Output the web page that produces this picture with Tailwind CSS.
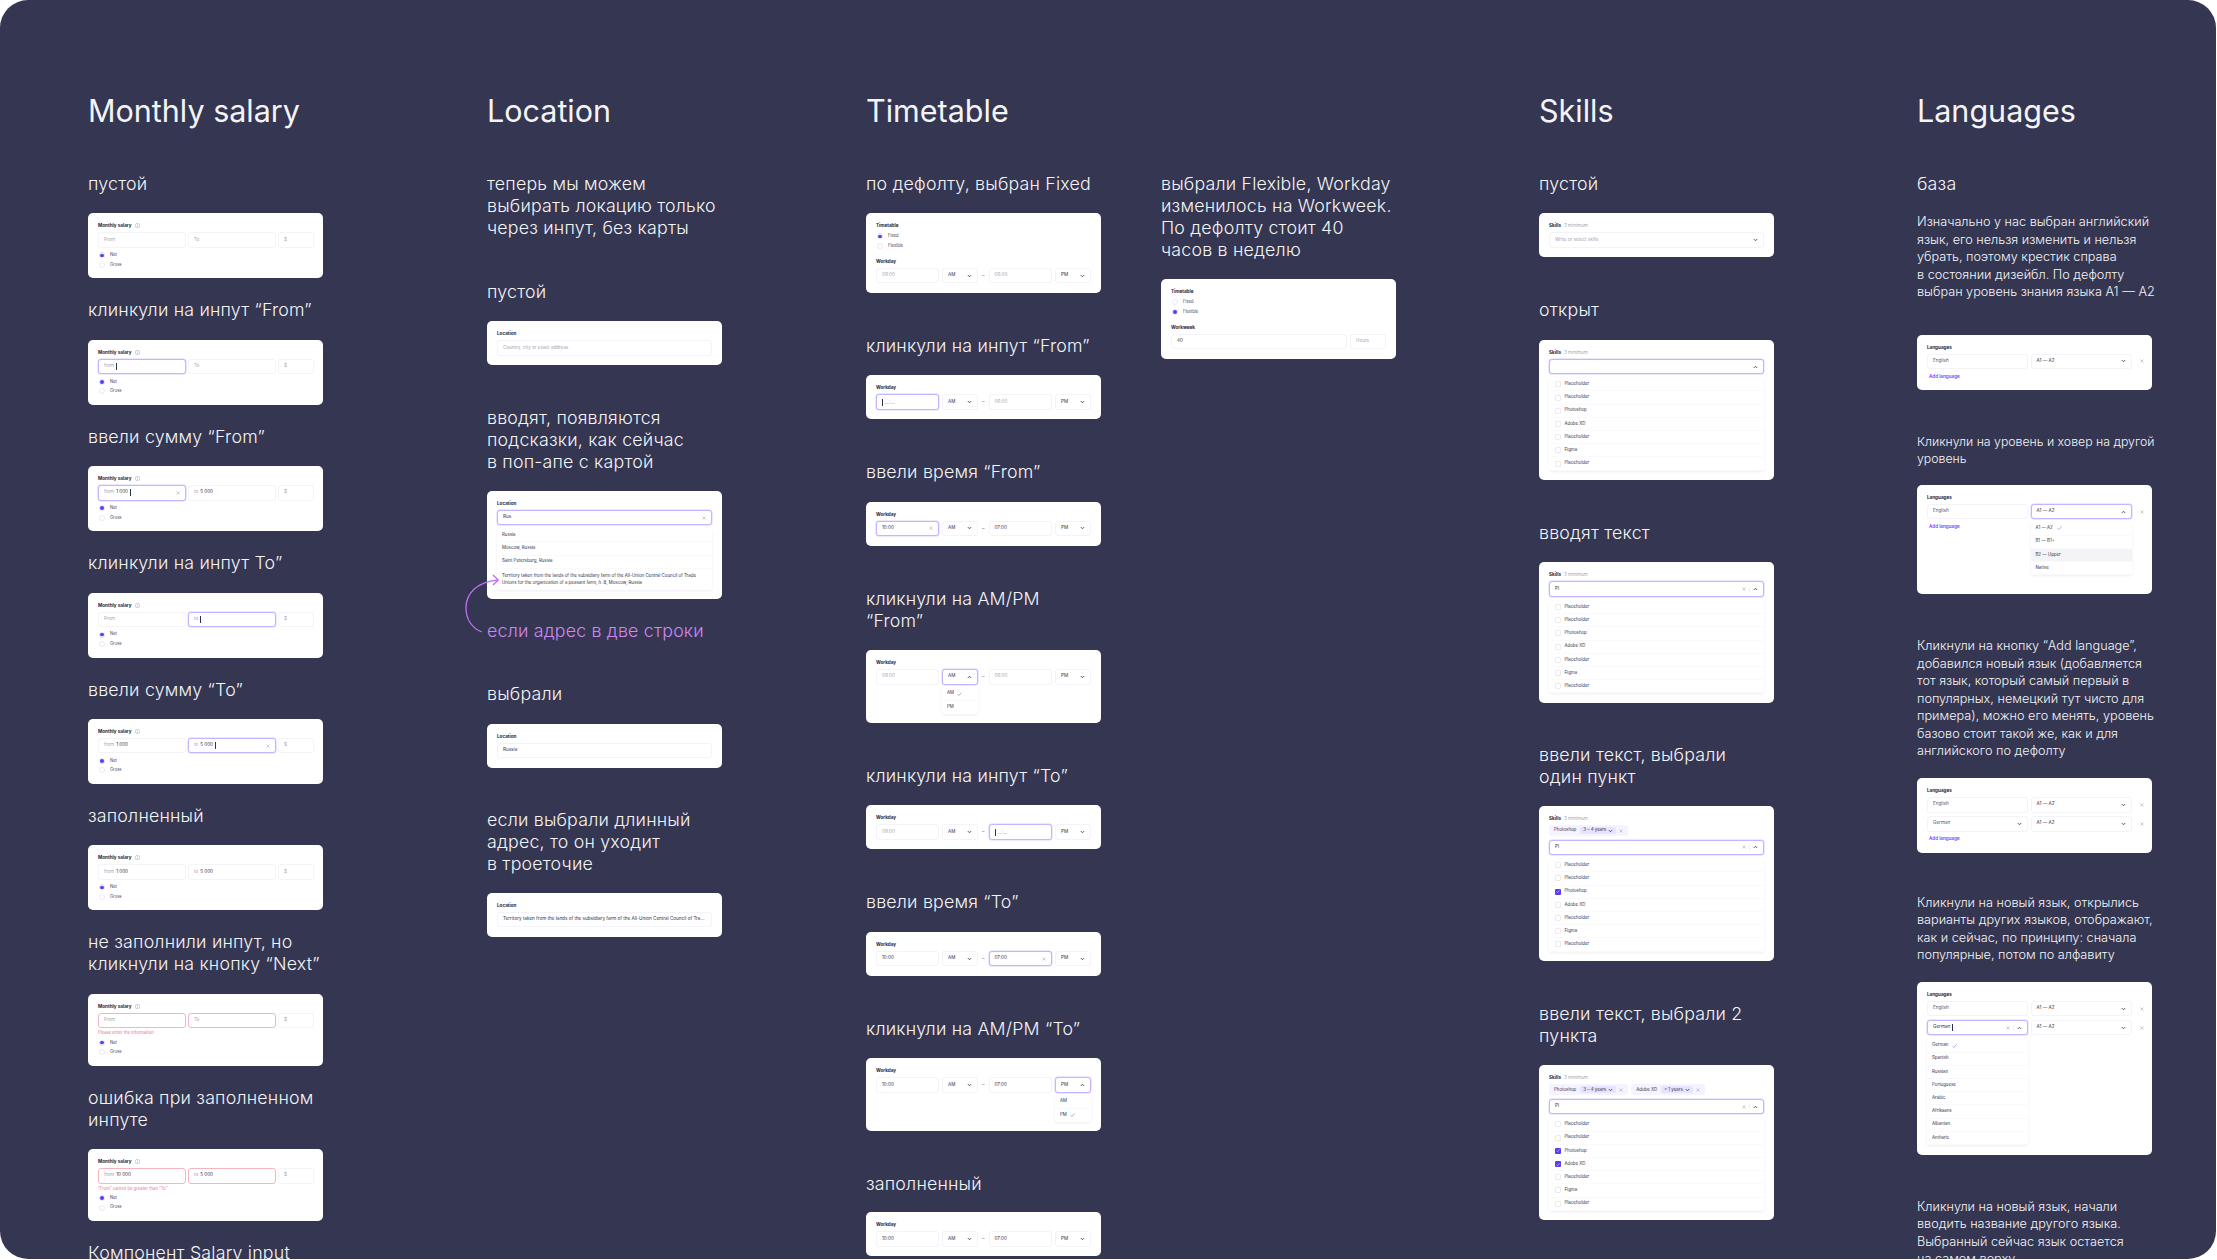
<!DOCTYPE html>
<html lang="en">
<head>
  <meta charset="UTF-8" />
  <title>Form states</title>
  <script src="https://cdn.jsdelivr.net/npm/@tailwindcss/browser@4"></script>
</head>
<body class="bg-white">
  <div class="h-[1259px] w-[2216px] overflow-hidden rounded-[28px] bg-[#353651] font-['Inter',sans-serif] text-[#f4f4f6]">
    <div id="board" class="flex pl-[88px] pt-[92px]"></div>
  </div>

  <script>
    // icons
    const chev = '<svg class="w-[5px] h-[4px] shrink-0" viewBox="0 0 10 8" fill="none" stroke="#33334d" stroke-width="1.6"><path d="M1.5 2l3.5 3.5L8.5 2"/></svg>';
    const chevUp = '<svg class="w-[5px] h-[4px] shrink-0" viewBox="0 0 10 8" fill="none" stroke="#33334d" stroke-width="1.6"><path d="M1.5 6L5 2.5 8.5 6"/></svg>';
    const cross = '<svg class="w-[4px] h-[4px] shrink-0" viewBox="0 0 8 8" fill="none" stroke="#9a9aa8" stroke-width="1"><path d="M1 1l6 6M7 1L1 7"/></svg>';
    const tick = '<svg class="w-[5px] h-[4px] shrink-0" viewBox="0 0 10 8" fill="none" stroke="#6a4dff" stroke-width="1"><path d="M1 4.5l2.5 2.5L9 1"/></svg>';
    const info = '<svg class="w-[5px] h-[5px] shrink-0" viewBox="0 0 10 10" fill="none" stroke="#8f8fa0" stroke-width=".9"><circle cx="5" cy="5" r="4.4"/><path d="M5 4.2v3M5 2.4v.9"/></svg>';
    const caret = '<span class="inline-block w-px h-[7px] bg-[#33334d] align-middle"></span>';

    const boxBase = 'h-[15.5px] shrink-0 flex items-center gap-[2px] rounded-[3px] bg-white px-[5px] text-[4.6px] ';
    const box = boxBase + 'border border-[#f3f3f8]';
    const boxFocus = boxBase + 'border border-[#c3b6ff] shadow-[0_0_0_.5px_#d8cfff]';
    const boxError = boxBase + 'border border-[#f7b4bf]';
    const ph = 'text-[#a4a4b2]';
    const val = 'text-[#33334d]';

    const field = (cls, w, inner) => `<div class="${cls} ${w}">${inner}</div>`;
    const card = body => `<div class="w-[235px] rounded-[5px] bg-white px-[10px] pt-[9px] pb-[9.5px] text-[#1d1d33]">${body}</div>`;
    const label = (text, extra) => `<div class="h-[7px] mb-[3px] flex items-center gap-[3px] text-[4.6px] leading-[7px] font-bold text-[#1d1d33]">${text}${extra || ''}</div>`;

    function radio(text, on) {
      const dot = on
        ? '<span class="w-[6px] h-[6px] rounded-full bg-[#e9e5ff] flex items-center justify-center"><span class="w-[3.5px] h-[3.5px] rounded-full bg-[#5b3cf5]"></span></span>'
        : '<span class="w-[6px] h-[6px] rounded-full border border-[#ebebf0] bg-white"></span>';
      return `<div class="h-[8px] flex items-center gap-[5px] pl-[1px] text-[4.2px] text-[#44445c]">${dot}<span>${text}</span></div>`;
    }

    const heading = (lines, mt) => `<div class="${mt} text-[17.8px] leading-[22px] tracking-[.2px] font-light">${lines.join('<br>')}</div>`;
    const para = (lines, cls) => `<div class="${cls} font-light">${lines.join('<br>')}</div>`;
    const gap = '<div class="mt-[18.4px]">';
    const end = '</div>';
    const M = 'mt-[42px]';

    // Monthly salary
    function salary(o) {
      const fromBox = o.from ? boxFocus : o.error ? boxError : box;
      const toBox = o.to ? boxFocus : o.error ? boxError : box;
      const a = o.from === 'focus'
        ? `<span class="${ph}">from</span> ${caret}`
        : o.from === 'typing'
          ? `<span class="${ph}">from</span><span class="${val}">1 000</span>${caret}<span class="ml-auto">${cross}</span>`
          : o.a
            ? `<span class="${ph}">from</span><span class="${val}">${o.a}</span>`
            : `<span class="${ph}">From</span>`;
      const b = o.to === 'focus'
        ? `<span class="${ph}">to</span> ${caret}`
        : o.to === 'typing'
          ? `<span class="${ph}">to</span><span class="${val}">5 000</span>${caret}<span class="ml-auto">${cross}</span>`
          : o.b
            ? `<span class="${ph}">to</span><span class="${val}">${o.b}</span>`
            : `<span class="${ph}">To</span>`;
      let html = label('Monthly salary', info);
      html += `<div class="flex gap-[2.5px]">${field(fromBox, 'w-[87.5px]', a)}${field(toBox, 'w-[87.5px]', b)}${field(box, 'w-[36px]', `<span class="${ph}">$</span>`)}</div>`;
      if (o.msg) html += `<div class="mt-[2px] h-[5px] leading-[5px] text-[4.2px] text-[#f0708a]">${o.msg}</div>`;
      html += `<div class="mt-[3.5px]">${radio('Net', true)}</div><div class="mt-[1.5px]">${radio('Gross', false)}</div>`;
      return card(html);
    }

    // Workday row
    function workday(o) {
      const dash = '<span class="w-[4.5px] shrink-0 text-center text-[5px] text-[#55556a]">–</span>';
      const sel = (name, open) => field(open ? boxFocus : box, 'w-[36px]', `<span class="${val}">${name}</span><span class="ml-auto">${open ? chevUp : chev}</span>`);
      const time = (mode, value, w) => {
        if (mode === 'focus') return field(boxFocus, w, `${caret}<span class="${ph}">__:__</span>`);
        if (mode === 'typing') return field(boxFocus, w, `<span class="${val}">${value}</span><span class="ml-auto">${cross}</span>`);
        return field(box, w, `<span class="${value === '09:00' || value === '06:00' ? ph : val}">${value}</span>`);
      };
      let row = `<div class="flex items-center gap-[3px]">${time(o.fm, o.f || '09:00', 'w-[63px]')}${sel('AM', o.open === 'am')}${dash}${time(o.tm, o.t || '06:00', 'w-[63.5px]')}${sel('PM', o.open === 'pm')}</div>`;
      const pop = (a, b, left) => `<div class="${left} mt-[3px] w-[36px] rounded-[3px] bg-white shadow-[0_1px_3px_#eeeef4] text-[4.4px] text-[#33334d]"><div class="h-[13px] flex items-center gap-[3px] px-[5px] border-b border-[#fafafc]">AM${a ? tick : ''}</div><div class="h-[13px] flex items-center gap-[3px] px-[5px]">PM${b ? tick : ''}</div></div>`;
      if (o.open === 'am') row += pop(true, false, 'ml-[66px]');
      if (o.open === 'pm') row += pop(false, true, 'ml-[179px]');
      return label('Workday') + row;
    }
    const w = o => card(workday(o));

    // Location input
    const loc = (cls, inner) => label('Location') + `<div class="${cls} overflow-hidden">${inner}</div>`;
    const longAddr = 'Territory taken from the lands of the subsidiary farm of the All-Union Central Council of Trade Unions for the organization of a peasant farm, h. 8, Moscow, Russia';

    // Skills
    const chip = (name, years) => `<div class="h-[11px] flex items-center gap-[3px] rounded-[3px] bg-[#f4f3ff] px-[5px] text-[4.4px] text-[#33334d]">${name}<span class="ml-[1px] h-[7px] flex items-center gap-[2px] rounded-[2px] bg-[#e6e3ff] px-[3px]">${years}${chev}</span>${cross}</div>`;
    function skills(o) {
      let html = label('Skills', '<span class="font-normal text-[#a4a4b2]">3 minimum</span>');
      if (o.chips) html += `<div class="flex gap-[3px] mb-[3.5px]">${o.chips}</div>`;
      const right = o.typed
        ? `<span class="ml-auto flex items-center gap-[3px]">${cross}<span class="w-px h-[5px] bg-[#eeeef3]"></span>${chevUp}</span>`
        : `<span class="ml-auto">${o.open ? chevUp : chev}</span>`;
      const txt = o.typed ? `<span class="${val}">Pl</span>` : (o.open ? '' : `<span class="${ph}">Write or select skills</span>`);
      html += `<div class="${o.open ? boxFocus : box}">${txt}${right}</div>`;
      if (o.open) {
        const names = ['Placeholder', 'Placeholder', 'Photoshop', 'Adobe XD', 'Placeholder', 'Figma', 'Placeholder'];
        const rows = names.map(n => {
          const cb = (o.checked || []).includes(n)
            ? '<span class="w-[6px] h-[6px] rounded-[1px] bg-[#5b3cf5] flex items-center justify-center"><svg class="w-[4px] h-[3px]" viewBox="0 0 10 8" fill="none" stroke="#fff" stroke-width="1.4"><path d="M1 4.5l2.5 2.5L9 1"/></svg></span>'
            : '<span class="w-[6px] h-[6px] rounded-[1px] border border-[#ebebf0] bg-white"></span>';
          return `<div class="h-[13.2px] flex items-center gap-[4px] px-[5.5px] border-b border-[#fafafc] text-[4.4px] text-[#33334d]">${cb}${n}</div>`;
        }).join('');
        html += `<div class="mt-[4px] rounded-[3px] bg-white shadow-[0_1px_3px_#eeeef4]">${rows}</div>`;
      }
      return card(html);
    }

    // Languages
    function langRow(name, o) {
      o = o || {};
      const left = o.edit
        ? field(boxFocus, 'w-[101px]', `<span class="${val}">${name}</span>${caret}<span class="ml-auto flex items-center gap-[3px]">${cross}<span class="w-px h-[5px] bg-[#eeeef3]"></span>${chevUp}</span>`)
        : field(box, 'w-[101px]', `<span class="text-[#55556a]">${name}</span>${o.pick ? `<span class="ml-auto">${chev}</span>` : ''}`);
      const right = field(o.open ? boxFocus : box, 'w-[101px]', `<span class="${val}">A1 — A2</span><span class="ml-auto">${o.open ? chevUp : chev}</span>`);
      return `<div class="flex items-center gap-[2.5px]">${left}${right}<span class="ml-[5.5px]">${cross}</span></div>`;
    }
    const addLang = '<div class="mt-[3.5px] ml-[2px] h-[8px] leading-[8px] text-[4.6px] font-semibold text-[#6a4dff]">Add language</div>';
    const popRows = (items, marks) => items.map((n, i) => `<div class="h-[13.2px] flex items-center gap-[4px] px-[5px] border-b border-[#fafafc] text-[4.4px] text-[#33334d] ${i === marks.hover ? 'bg-[#f4f4f6]' : ''}">${n}${i === marks.check ? tick : ''}</div>`).join('');
    const pText = 'mt-[42.5px] text-[12.7px] leading-[17.5px]';

    const salaryCol =
      heading(['пустой'], '') + gap + salary({}) + end +
      heading(['клинкули на инпут “From”'], 'mt-[21px]') + gap + salary({ from: 'focus' }) + end +
      heading(['ввели сумму “From”'], 'mt-[21px]') + gap + salary({ from: 'typing', b: '5 000' }) + end +
      heading(['клинкули на инпут To”'], 'mt-[21px]') + gap + salary({ to: 'focus' }) + end +
      heading(['ввели сумму “To”'], 'mt-[21px]') + gap + salary({ a: '1 000', to: 'typing' }) + end +
      heading(['заполненный'], 'mt-[21px]') + gap + salary({ a: '1 000', b: '5 000' }) + end +
      heading(['не заполнили инпут, но', 'кликнули на кнопку “Next”'], 'mt-[21px]') + gap + salary({ error: true, msg: 'Please enter the information' }) + end +
      heading(['ошибка при заполненном', 'инпуте'], 'mt-[21px]') + gap + salary({ error: true, a: '10 000', b: '5 000', msg: '“From” cannot be greater than “To”' }) + end +
      heading(['Компонент Salary input'], 'mt-[21px]');

    const locCol =
      heading(['теперь мы можем', 'выбирать локацию только', 'через инпут, без карты'], '') +
      heading(['пустой'], M) + gap + card(loc(box, `<span class="${ph}">Country, city or exact address</span>`)) + end +
      heading(['вводят, появляются', 'подсказки, как сейчас', 'в поп-апе с картой'], M) + '<div class="mt-[17.4px]">' + card(
        loc(boxFocus, `<span class="${val}">Rus</span><span class="ml-auto">${cross}</span>`) +
        `<div class="mt-[4px] rounded-[3px] bg-white shadow-[0_1px_3px_#eeeef4] text-[4.4px] text-[#33334d]">
          <div class="h-[13.2px] flex items-center px-[5px] border-b border-[#fafafc]">Russia</div>
          <div class="h-[13.2px] flex items-center px-[5px] border-b border-[#fafafc]">Moscow, Russia</div>
          <div class="h-[13.2px] flex items-center px-[5px] border-b border-[#fafafc]">Saint Petersburg, Russia</div>
          <div class="py-[3px] px-[5px] leading-[7.4px]">${longAddr}</div>
        </div>`) + end +
      `<div class="relative mt-[21px] text-[17.8px] leading-[22px] tracking-[.2px] font-light text-[#cf86f2]">если адрес в две строки<svg class="absolute left-[-24px] top-[-58px] w-[38px] h-[72px]" viewBox="0 0 38 72" fill="none" stroke="#c06df5" stroke-width="1.3"><path d="M19 70C8 66 3 56 3 46 3 32 13 20 35 18"/><path d="M30 13l5.3 5-5.3 5"/></svg></div>` +
      heading(['выбрали'], 'mt-[41px]') + gap + card(loc(box, `<span class="${val}">Russia</span>`)) + end +
      heading(['если выбрали длинный', 'адрес, то он уходит', 'в троеточие'], 'mt-[41px]') + gap + card(loc(box, `<span class="${val} truncate">${longAddr}</span>`)) + end;

    const timeCol =
      heading(['по дефолту, выбран Fixed'], '') + gap + card(label('Timetable') + radio('Fixed', true) + `<div class="mt-[1.5px]">${radio('Flexible', false)}</div><div class="mt-[8px]">${workday({})}</div>`) + end +
      heading(['клинкули на инпут “From”'], M) + gap + w({ fm: 'focus' }) + end +
      heading(['ввели время “From”'], M) + gap + w({ fm: 'typing', f: '10:00', t: '07:00' }) + end +
      heading(['кликнули на AM/PM', '“From”'], M) + gap + w({ open: 'am' }) + end +
      heading(['клинкули на инпут “To”'], M) + gap + w({ tm: 'focus' }) + end +
      heading(['ввели время “To”'], M) + gap + w({ f: '10:00', tm: 'typing', t: '07:00' }) + end +
      heading(['кликнули на AM/PM “To”'], M) + gap + w({ f: '10:00', t: '07:00', open: 'pm' }) + end +
      heading(['заполненный'], M) + '<div class="mt-[17px]">' + w({ f: '10:00', t: '07:00' }) + end;

    const flexCol =
      heading(['выбрали Flexible, Workday', 'изменилось на Workweek.', 'По дефолту стоит 40', 'часов в неделю'], '') + gap + card(
        label('Timetable') + radio('Fixed', false) + `<div class="mt-[1.5px]">${radio('Flexible', true)}</div>` +
        `<div class="mt-[8px]">${label('Workweek')}<div class="flex gap-[3px]">${field(box, 'w-[176px]', `<span class="${val}">40</span>`)}${field(box, 'w-[36px]', `<span class="${ph}">Hours</span>`)}</div></div>`) + end;

    const photoChip = chip('Photoshop', '3 – 4 years');
    const skillsCol =
      heading(['пустой'], '') + gap + skills({}) + end +
      heading(['открыт'], M) + gap + skills({ open: true }) + end +
      heading(['вводят текст'], M) + gap + skills({ open: true, typed: true }) + end +
      heading(['ввели текст, выбрали', 'один пункт'], 'mt-[41px]') + gap + skills({ open: true, typed: true, checked: ['Photoshop'], chips: photoChip }) + end +
      heading(['ввели текст, выбрали 2', 'пункта'], M) + gap + skills({ open: true, typed: true, checked: ['Photoshop', 'Adobe XD'], chips: photoChip + chip('Adobe XD', '&lt; 1 years') }) + end;

    const levels = ['A1 — A2', 'B1 — B1+', 'B2 — Upper', 'Native'];
    const langsPop = ['German', 'Spanish', 'Russian', 'Portuguese', 'Arabic', 'Afrikaans', 'Albanian', 'Amharic'];
    const langCol =
      heading(['база'], '') +
      para(['Изначально у нас выбран английский', 'язык, его нельзя изменить и нельзя', 'убрать, поэтому крестик справа', 'в состоянии дизейбл. По дефолту', 'выбран уровень знания языка A1 — A2'], 'mt-[18px] text-[12.7px] leading-[17.5px]') +
      '<div class="mt-[34px]">' + card(label('Languages') + langRow('English') + addLang) + end +
      para(['Кликнули на уровень и ховер на другой', 'уровень'], 'mt-[42.5px] text-[12.3px] leading-[17px]') + gap + card(label('Languages') + langRow('English', { open: true }) + addLang +
        `<div class="-mt-[8.5px] mb-[9px] ml-[103.5px] w-[101px] rounded-[3px] bg-white shadow-[0_1px_3px_#eeeef4]">${popRows(levels, { check: 0, hover: 2 })}</div>`) + end +
      para(['Кликнули на кнопку “Add language”,', 'добавился новый язык (добавляется', 'тот язык, который самый первый в', 'популярных, немецкий тут чисто для', 'примера), можно его менять, уровень', 'базово стоит такой же, как и для', 'английского по дефолту'], 'mt-[43.5px] text-[12.7px] leading-[17.5px]') + gap + card(label('Languages') + langRow('English') + '<div class="mt-[3.5px]">' + langRow('German', { pick: true }) + end + addLang) + end +
      para(['Кликнули на новый язык, открылись', 'варианты других языков, отображают,', 'как и сейчас, по принципу: сначала', 'популярные, потом по алфавиту'], 'mt-[41px] text-[12.7px] leading-[17.5px]') + gap + card(label('Languages') + langRow('English') + '<div class="mt-[3.5px]">' + langRow('German', { edit: true }) + end +
        `<div class="mt-[4px] mb-[1px] w-[101px] rounded-[3px] bg-white shadow-[0_1px_3px_#eeeef4]">${popRows(langsPop, { check: 0 })}</div>`) + end +
      para(['Кликнули на новый язык, начали', 'вводить название другого языка.', 'Выбранный сейчас язык остается', 'на самом верху'], pText);

    const col = (width, title, body) => `<div class="shrink-0 ${width}"><div class="text-[30.5px] leading-[38px] h-[38px] mb-[43px] font-normal">${title}</div>${body}</div>`;

    document.getElementById('board').innerHTML =
      col('w-[399px]', 'Monthly salary', salaryCol) +
      col('w-[379px]', 'Location', locCol) +
      col('w-[295px]', 'Timetable', timeCol) +
      `<div class="shrink-0 w-[378px] pt-[81px]">${flexCol}</div>` +
      col('w-[378px]', 'Skills', skillsCol) +
      col('w-[300px]', 'Languages', langCol);
  </script>
</body>
</html>
